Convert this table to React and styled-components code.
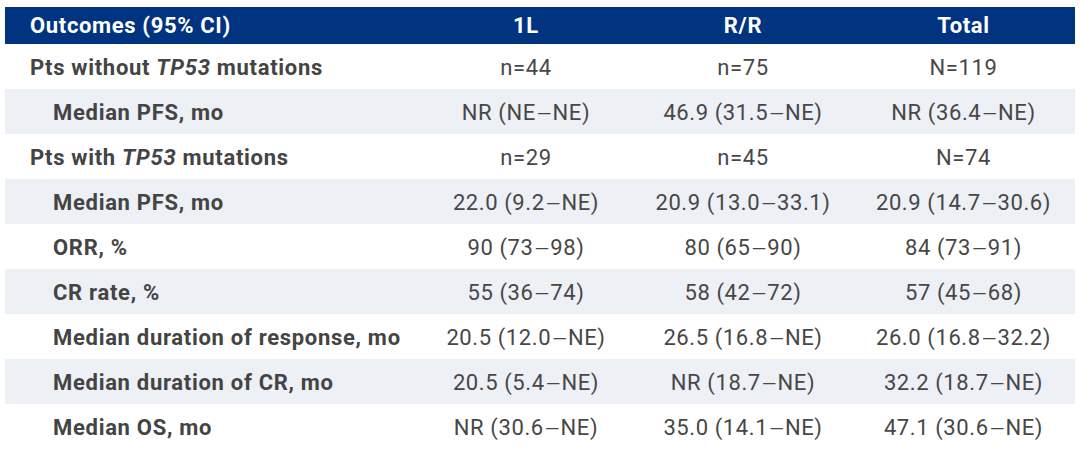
import React from "react";
import styled, { createGlobalStyle } from "styled-components";

const Global = createGlobalStyle`
  html, body { margin: 0; padding: 0; background: #ffffff; }
  body { font-family: Roboto, "Liberation Sans", Arial, sans-serif; }
`;

const Page = styled.div`
  padding: 7px 5px 0 5px;
  width: 1070px;
`;

const Table = styled.div`
  display: grid;
  grid-template-columns: 413px 216px 218px 223px;
  width: 1070px;
`;

const HeaderRow = styled.div`
  display: contents;
`;

const HeadCell = styled.div`
  background: #003380;
  color: #ffffff;
  font-weight: 700;
  font-size: 22px;
  letter-spacing: 0.65px;
  height: 37px;
  display: flex;
  align-items: center;
  justify-content: ${(p) => (p.$left ? "flex-start" : "center")};
  padding-left: ${(p) => (p.$left ? "25px" : "0")};
  box-sizing: border-box;
`;

const Row = styled.div`
  display: contents;
`;

const LabelCell = styled.div`
  background: ${(p) => (p.$shaded ? "#edf0f5" : "#ffffff")};
  color: #444444;
  font-weight: 700;
  font-size: 22px;
  letter-spacing: 0.7px;
  height: 45px;
  display: flex;
  align-items: center;
  padding-top: 1px;
  padding-left: ${(p) => (p.$indent ? "48px" : "25px")};
  box-sizing: border-box;
  white-space: nowrap;
`;

const ValueCell = styled.div`
  background: ${(p) => (p.$shaded ? "#edf0f5" : "#ffffff")};
  color: #474747;
  font-weight: 400;
  font-size: 22px;
  letter-spacing: 0.6px;
  height: 45px;
  display: flex;
  align-items: center;
  justify-content: center;
  padding-top: 1px;
  box-sizing: border-box;
  white-space: nowrap;
`;

const Gene = styled.i`
  font-style: italic;
`;

const Dash = styled.span`
  font-size: 0.86em;
  letter-spacing: 0;
  margin: 0 1px;
`;

const r = (a, b) => (
  <span>
    {a}
    <Dash>—</Dash>
    {b}
  </span>
);

const rows = [
  { label: <span>Pts without <Gene>TP53</Gene> mutations</span>, values: ["n=44", "n=75", "N=119"] },
  { label: "Median PFS, mo", indent: true, shaded: true, values: [r("NR (NE", "NE)"), r("46.9 (31.5", "NE)"), r("NR (36.4", "NE)")] },
  { label: <span>Pts with <Gene>TP53</Gene> mutations</span>, values: ["n=29", "n=45", "N=74"] },
  { label: "Median PFS, mo", indent: true, shaded: true, values: [r("22.0 (9.2", "NE)"), r("20.9 (13.0", "33.1)"), r("20.9 (14.7", "30.6)")] },
  { label: "ORR, %", indent: true, values: [r("90 (73", "98)"), r("80 (65", "90)"), r("84 (73", "91)")] },
  { label: "CR rate, %", indent: true, shaded: true, values: [r("55 (36", "74)"), r("58 (42", "72)"), r("57 (45", "68)")] },
  { label: "Median duration of response, mo", indent: true, values: [r("20.5 (12.0", "NE)"), r("26.5 (16.8", "NE)"), r("26.0 (16.8", "32.2)")] },
  { label: "Median duration of CR, mo", indent: true, shaded: true, values: [r("20.5 (5.4", "NE)"), r("NR (18.7", "NE)"), r("32.2 (18.7", "NE)")] },
  { label: "Median OS, mo", indent: true, values: [r("NR (30.6", "NE)"), r("35.0 (14.1", "NE)"), r("47.1 (30.6", "NE)")] },
];

export default function App() {
  return (
    <>
      <Global />
      <Page>
        <Table>
          <HeaderRow>
            <HeadCell $left>Outcomes (95% CI)</HeadCell>
            <HeadCell>1L</HeadCell>
            <HeadCell>R/R</HeadCell>
            <HeadCell>Total</HeadCell>
          </HeaderRow>
          {rows.map((row, i) => (
            <Row key={i}>
              <LabelCell $indent={row.indent} $shaded={row.shaded}>{row.label}</LabelCell>
              {row.values.map((v, j) => (
                <ValueCell key={j} $shaded={row.shaded}>{v}</ValueCell>
              ))}
            </Row>
          ))}
        </Table>
      </Page>
    </>
  );
}
